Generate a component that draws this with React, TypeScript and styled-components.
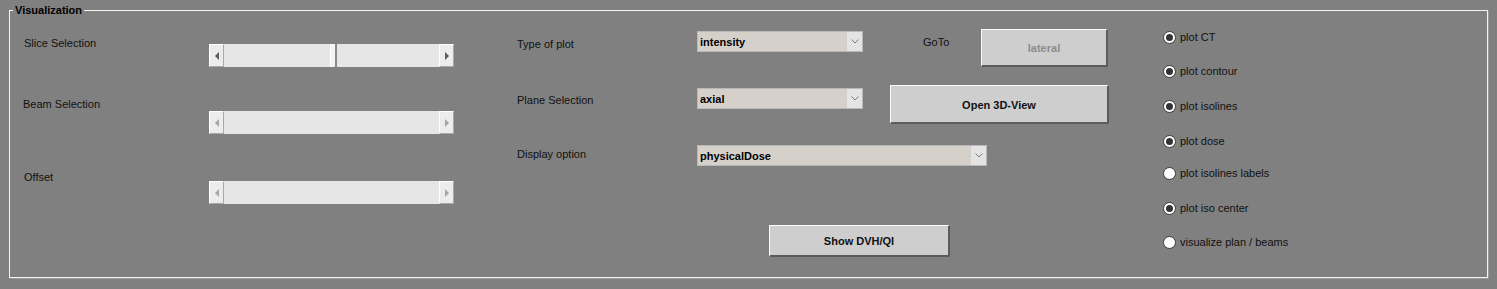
import React from 'react';
import styled, { createGlobalStyle } from 'styled-components';


// Style
const GlobalStyle = createGlobalStyle`
  html, body {
    margin: 0;
    padding: 0;
    background: #808080;
    font-family: "Liberation Sans", Arial, sans-serif;
    font-size: 11px;
    color: #111;
  }
`;

const Page = styled.div`
  width: 1497px;
  height: 289px;
  padding: 4px 9px 0 9px;
  box-sizing: border-box;
`;

const Frame = styled.fieldset`
  margin: 0;
  padding: 0;
  height: 274px;
  box-sizing: border-box;
  border: 1px solid #f4f4f4;
  box-shadow: 1px 1px 0 #9a9a9a;
  min-width: 0;
  legend {
    margin-left: 3px;
    padding: 0 2px;
    font-weight: bold;
    line-height: 13px;
    color: #000;
  }
`;

const Layout = styled.div`
  display: flex;
  align-items: flex-start;
  padding-left: 13px;
`;

const SliderColumn = styled.div`
  display: flex;
  flex-direction: column;
  width: 431px;
`;

const SliderRow = styled.div<{ $top: number; $offset: number; $indent: number }>`
  display: grid;
  grid-template-columns: 186px 245px;
  align-items: start;
  margin-top: ${p => p.$top}px;
  > span {
    line-height: 13px;
    padding-left: ${p => p.$indent}px;
  }
  > div {
    margin-top: ${p => p.$offset}px;
  }
`;

const Track = styled.div`
  display: flex;
  height: 23px;
  background: #e6e6e6;
`;

const ArrowButton = styled.div<{ $enabled: boolean }>`
  width: 15px;
  flex: none;
  box-sizing: border-box;
  display: flex;
  align-items: center;
  justify-content: center;
  background: #ececec;
  border-top: 1px solid #fff;
  border-left: 1px solid #fff;
  border-right: 1px solid #a8a8a8;
  border-bottom: 1px solid #a8a8a8;
  color: ${p => (p.$enabled ? '#5a5a5a' : '#a6a6a6')};
`;

const Rail = styled.div`
  flex: 1;
  display: flex;
  align-items: stretch;
`;

const Thumb = styled.div`
  width: 7px;
  box-sizing: border-box;
  background: #f4f4f4;
  border-left: 1px solid #fff;
  border-right: 2px solid #8a8a8a;
`;

const MiddleColumn = styled.div`
  display: flex;
  flex-direction: column;
  width: 592px;
  margin-left: 63px;
`;

const ControlRow = styled.div<{ $top: number }>`
  display: flex;
  align-items: flex-start;
  margin-top: ${p => p.$top}px;
`;

const Label = styled.span<{ $width?: number; $top: number; $left?: number }>`
  width: ${p => (p.$width ? p.$width + 'px' : 'auto')};
  flex: none;
  margin-top: ${p => p.$top}px;
  margin-left: ${p => p.$left || 0}px;
  line-height: 13px;
`;

const Select = styled.div<{ $width: number; $top: number }>`
  width: ${p => p.$width}px;
  height: 21px;
  margin-top: ${p => p.$top}px;
  box-sizing: border-box;
  display: flex;
  overflow: hidden;
  background: #d5d1ca;
  border: 1px solid #b8b8b8;
  font-weight: bold;
  color: #000;
  span {
    flex: 1;
    padding: 2px 0 0 2px;
    line-height: 17px;
  }
`;

const SelectArrow = styled.div`
  width: 15px;
  display: flex;
  align-items: center;
  justify-content: center;
  background: #e4e4e4;
`;

const Button = styled.button<{ $width: number; $height: number; $left?: number; $disabled?: boolean }>`
  width: ${p => p.$width}px;
  height: ${p => p.$height}px;
  margin-left: ${p => p.$left || 0}px;
  flex: none;
  box-sizing: border-box;
  padding: 1px 0 0;
  background: #cecece;
  border-top: 1px solid #fbfbfb;
  border-left: 1px solid #fbfbfb;
  border-right: 2px solid #5c5c5c;
  border-bottom: 2px solid #5c5c5c;
  font-family: "Liberation Sans", Arial, sans-serif;
  font-size: 11px;
  font-weight: bold;
  color: ${p => (p.$disabled ? '#8c8c8c' : '#111')};
`;

const RadioColumn = styled.div`
  display: flex;
  flex-direction: column;
  margin-left: 54px;
  margin-top: 14px;
`;

const RadioItem = styled.label<{ $top: number }>`
  display: flex;
  align-items: center;
  gap: 4px;
  height: 13px;
  line-height: 13px;
  margin-top: ${p => p.$top}px;
`;

const RadioDot = styled.span<{ $checked: boolean }>`
  width: 13px;
  height: 13px;
  box-sizing: border-box;
  border-radius: 50%;
  background: #fff;
  border: 1px solid #3a3a3a;
  display: flex;
  align-items: center;
  justify-content: center;
  &::after {
    content: '';
    display: ${p => (p.$checked ? 'block' : 'none')};
    width: 7px;
    height: 7px;
    border-radius: 50%;
    background: #333;
  }
`;


// Component
function Slider({ enabled, thumb }: { enabled: boolean; thumb?: number }) {
  return (
    <Track>
      <ArrowButton $enabled={enabled}>
        <svg width="4" height="8" viewBox="0 0 4 8"><polygon points="4,0 4,8 0,4" fill="currentColor" /></svg>
      </ArrowButton>
      <Rail>
        {thumb !== undefined && (
          <>
            <div style={{ width: thumb }} />
            <Thumb />
          </>
        )}
      </Rail>
      <ArrowButton $enabled={enabled}>
        <svg width="4" height="8" viewBox="0 0 4 8"><polygon points="0,0 0,8 4,4" fill="currentColor" /></svg>
      </ArrowButton>
    </Track>
  );
}

function Dropdown({ value, width, top }: { value: string; width: number; top: number }) {
  return (
    <Select $width={width} $top={top}>
      <span>{value}</span>
      <SelectArrow>
        <svg width="8" height="5" viewBox="0 0 8 5"><polyline points="0.5,0.5 4,4 7.5,0.5" fill="none" stroke="#7a7a7a" strokeWidth="1" /></svg>
      </SelectArrow>
    </Select>
  );
}

const radios = [
  { label: 'plot CT', checked: true, top: 0 },
  { label: 'plot contour', checked: true, top: 21 },
  { label: 'plot isolines', checked: true, top: 22 },
  { label: 'plot dose', checked: true, top: 22 },
  { label: 'plot isolines labels', checked: false, top: 19 },
  { label: 'plot iso center', checked: true, top: 22 },
  { label: 'visualize plan / beams', checked: false, top: 21 },
];

function App() {
  return (
    <Page>
      <GlobalStyle />
      <Frame>
        <legend>Visualization</legend>
        <Layout>
          <SliderColumn>
            <SliderRow $top={20} $offset={7} $indent={1}>
              <span>Slice Selection</span>
              <Slider enabled thumb={106} />
            </SliderRow>
            <SliderRow $top={31} $offset={13} $indent={0}>
              <span>Beam Selection</span>
              <Slider enabled={false} />
            </SliderRow>
            <SliderRow $top={37} $offset={10} $indent={1}>
              <span>Offset</span>
              <Slider enabled={false} />
            </SliderRow>
          </SliderColumn>

          <MiddleColumn>
            <ControlRow $top={12}>
              <Label $width={180} $top={9}>Type of plot</Label>
              <Dropdown value="intensity" width={166} top={2} />
              <Label $width={58} $top={7} $left={60}>GoTo</Label>
              <Button $width={127} $height={38} $disabled>lateral</Button>
            </ControlRow>
            <ControlRow $top={18}>
              <Label $width={180} $top={9}>Plane Selection</Label>
              <Dropdown value="axial" width={166} top={3} />
              <Button $width={219} $height={39} $left={27}>Open 3D-View</Button>
            </ControlRow>
            <ControlRow $top={21}>
              <Label $width={180} $top={3}>Display option</Label>
              <Dropdown value="physicalDose" width={290} top={0} />
            </ControlRow>
            <ControlRow $top={59}>
              <Button $width={181} $height={32} $left={252}>Show DVH/QI</Button>
            </ControlRow>
          </MiddleColumn>

          <RadioColumn>
            {radios.map(r => (
              <RadioItem key={r.label} $top={r.top}>
                <RadioDot $checked={r.checked} />
                {r.label}
              </RadioItem>
            ))}
          </RadioColumn>
        </Layout>
      </Frame>
    </Page>
  );
}

export default App;
